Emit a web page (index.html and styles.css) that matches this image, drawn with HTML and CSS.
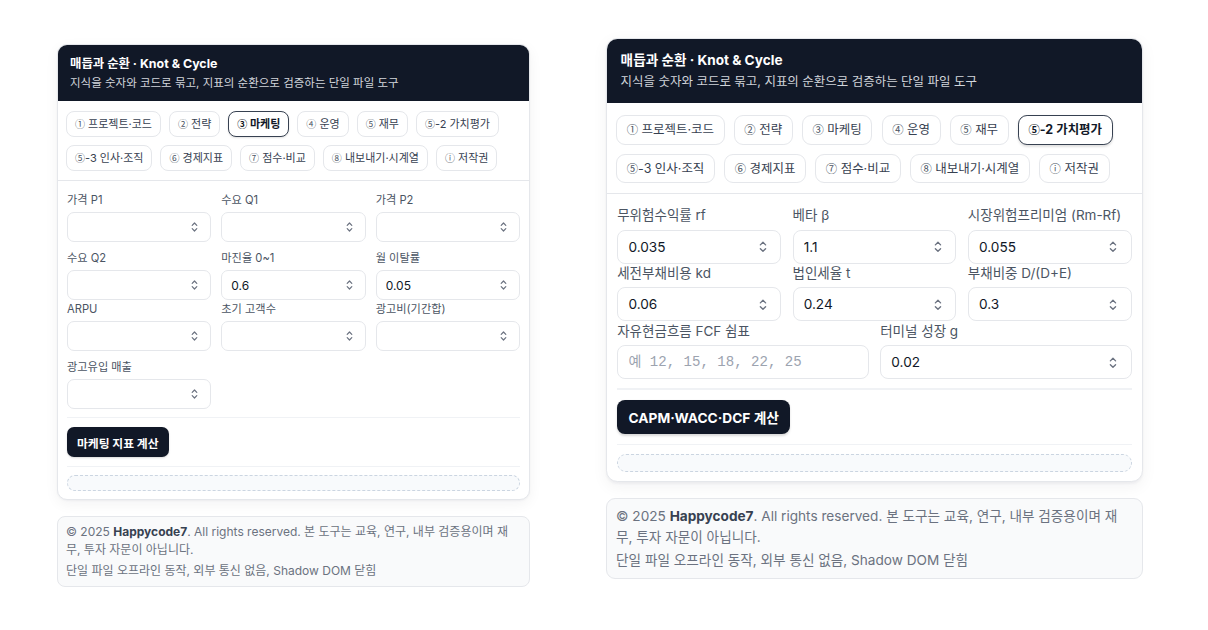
FILE: index.html
```html
<!DOCTYPE html>
<html lang="ko">
<head>
<meta charset="utf-8">
<title>매듭과 순환 · Knot &amp; Cycle</title>
<link rel="stylesheet" href="styles.css">
</head>
<body>
<div class="page">
  <div class="col col-left">
    <section class="card">
      <header class="head">
        <h1 class="title">매듭과 순환 · Knot &amp; Cycle</h1>
        <p class="sub">지식을 숫자와 코드로 묶고, 지표의 순환으로 검증하는 단일 파일 도구</p>
      </header>
      <nav class="tabs">
        <button class="tab"><span class="n">①</span> 프로젝트·코드</button>
        <button class="tab"><span class="n">②</span> 전략</button>
        <button class="tab active"><span class="n">③</span> 마케팅</button>
        <button class="tab"><span class="n">④</span> 운영</button>
        <button class="tab"><span class="n">⑤</span> 재무</button>
        <button class="tab"><span class="n">⑤</span>-2 가치평가</button>
        <button class="tab"><span class="n">⑤</span>-3 인사·조직</button>
        <button class="tab"><span class="n">⑥</span> 경제지표</button>
        <button class="tab"><span class="n">⑦</span> 점수·비교</button>
        <button class="tab"><span class="n">⑧</span> 내보내기·시계열</button>
        <button class="tab"><span class="n">ⓘ</span> 저작권</button>
      </nav>
      <div class="body">
        <div class="frow c3">
          <label class="field"><span class="lbl">가격 P1</span><span class="box"><input type="number"><svg class="spin" viewBox="0 0 7 12" width="7" height="12"><path d="M1.2 4.3 L3.5 2 L5.8 4.3 M1.2 7.7 L3.5 10 L5.8 7.7"/></svg></span></label>
          <label class="field"><span class="lbl">수요 Q1</span><span class="box"><input type="number"><svg class="spin" viewBox="0 0 7 12" width="7" height="12"><path d="M1.2 4.3 L3.5 2 L5.8 4.3 M1.2 7.7 L3.5 10 L5.8 7.7"/></svg></span></label>
          <label class="field"><span class="lbl">가격 P2</span><span class="box"><input type="number"><svg class="spin" viewBox="0 0 7 12" width="7" height="12"><path d="M1.2 4.3 L3.5 2 L5.8 4.3 M1.2 7.7 L3.5 10 L5.8 7.7"/></svg></span></label>
        </div>
        <div class="frow c3 spaced">
          <label class="field"><span class="lbl">수요 Q2</span><span class="box"><input type="number"><svg class="spin" viewBox="0 0 7 12" width="7" height="12"><path d="M1.2 4.3 L3.5 2 L5.8 4.3 M1.2 7.7 L3.5 10 L5.8 7.7"/></svg></span></label>
          <label class="field"><span class="lbl">마진율 0~1</span><span class="box"><input type="number" value="0.6"><svg class="spin" viewBox="0 0 7 12" width="7" height="12"><path d="M1.2 4.3 L3.5 2 L5.8 4.3 M1.2 7.7 L3.5 10 L5.8 7.7"/></svg></span></label>
          <label class="field"><span class="lbl">월 이탈률</span><span class="box"><input type="number" value="0.05"><svg class="spin" viewBox="0 0 7 12" width="7" height="12"><path d="M1.2 4.3 L3.5 2 L5.8 4.3 M1.2 7.7 L3.5 10 L5.8 7.7"/></svg></span></label>
        </div>
        <div class="frow c3">
          <label class="field"><span class="lbl">ARPU</span><span class="box"><input type="number"><svg class="spin" viewBox="0 0 7 12" width="7" height="12"><path d="M1.2 4.3 L3.5 2 L5.8 4.3 M1.2 7.7 L3.5 10 L5.8 7.7"/></svg></span></label>
          <label class="field"><span class="lbl">초기 고객수</span><span class="box"><input type="number"><svg class="spin" viewBox="0 0 7 12" width="7" height="12"><path d="M1.2 4.3 L3.5 2 L5.8 4.3 M1.2 7.7 L3.5 10 L5.8 7.7"/></svg></span></label>
          <label class="field"><span class="lbl">광고비(기간합)</span><span class="box"><input type="number"><svg class="spin" viewBox="0 0 7 12" width="7" height="12"><path d="M1.2 4.3 L3.5 2 L5.8 4.3 M1.2 7.7 L3.5 10 L5.8 7.7"/></svg></span></label>
        </div>
        <div class="frow c3 spaced">
          <label class="field"><span class="lbl">광고유입 매출</span><span class="box"><input type="number"><svg class="spin" viewBox="0 0 7 12" width="7" height="12"><path d="M1.2 4.3 L3.5 2 L5.8 4.3 M1.2 7.7 L3.5 10 L5.8 7.7"/></svg></span></label>
        </div>
        <div class="sep"></div>
        <div class="actions"><button class="btn">마케팅 지표 계산</button></div>
        <div class="sep"></div>
        <div class="out"></div>
      </div>
    </section>
    <footer class="foot">
      <p>© 2025 <b>Happycode7</b>. All rights reserved. 본 도구는 교육, 연구, 내부 검증용이며 재무, 투자 자문이 아닙니다.</p>
      <p>단일 파일 오프라인 동작, 외부 통신 없음, Shadow DOM 닫힘</p>
    </footer>
  </div>

  <div class="col col-right">
    <div class="scaled">
      <section class="card">
        <header class="head">
          <h1 class="title">매듭과 순환 · Knot &amp; Cycle</h1>
          <p class="sub">지식을 숫자와 코드로 묶고, 지표의 순환으로 검증하는 단일 파일 도구</p>
        </header>
        <nav class="tabs">
          <button class="tab"><span class="n">①</span> 프로젝트·코드</button>
          <button class="tab"><span class="n">②</span> 전략</button>
          <button class="tab"><span class="n">③</span> 마케팅</button>
          <button class="tab"><span class="n">④</span> 운영</button>
          <button class="tab"><span class="n">⑤</span> 재무</button>
          <button class="tab active"><span class="n">⑤</span>-2 가치평가</button>
          <button class="tab"><span class="n">⑤</span>-3 인사·조직</button>
          <button class="tab"><span class="n">⑥</span> 경제지표</button>
          <button class="tab"><span class="n">⑦</span> 점수·비교</button>
          <button class="tab"><span class="n">⑧</span> 내보내기·시계열</button>
          <button class="tab"><span class="n">ⓘ</span> 저작권</button>
        </nav>
        <div class="body">
          <div class="frow c3">
            <label class="field"><span class="lbl">무위험수익률 rf</span><span class="box"><input type="number" value="0.035"><svg class="spin" viewBox="0 0 7 12" width="7" height="12"><path d="M1.2 4.3 L3.5 2 L5.8 4.3 M1.2 7.7 L3.5 10 L5.8 7.7"/></svg></span></label>
            <label class="field"><span class="lbl">베타 β</span><span class="box"><input type="number" value="1.1"><svg class="spin" viewBox="0 0 7 12" width="7" height="12"><path d="M1.2 4.3 L3.5 2 L5.8 4.3 M1.2 7.7 L3.5 10 L5.8 7.7"/></svg></span></label>
            <label class="field"><span class="lbl">시장위험프리미엄 (Rm-Rf)</span><span class="box"><input type="number" value="0.055"><svg class="spin" viewBox="0 0 7 12" width="7" height="12"><path d="M1.2 4.3 L3.5 2 L5.8 4.3 M1.2 7.7 L3.5 10 L5.8 7.7"/></svg></span></label>
          </div>
          <div class="frow c3">
            <label class="field"><span class="lbl">세전부채비용 kd</span><span class="box"><input type="number" value="0.06"><svg class="spin" viewBox="0 0 7 12" width="7" height="12"><path d="M1.2 4.3 L3.5 2 L5.8 4.3 M1.2 7.7 L3.5 10 L5.8 7.7"/></svg></span></label>
            <label class="field"><span class="lbl">법인세율 t</span><span class="box"><input type="number" value="0.24"><svg class="spin" viewBox="0 0 7 12" width="7" height="12"><path d="M1.2 4.3 L3.5 2 L5.8 4.3 M1.2 7.7 L3.5 10 L5.8 7.7"/></svg></span></label>
            <label class="field"><span class="lbl">부채비중 D/(D+E)</span><span class="box"><input type="number" value="0.3"><svg class="spin" viewBox="0 0 7 12" width="7" height="12"><path d="M1.2 4.3 L3.5 2 L5.8 4.3 M1.2 7.7 L3.5 10 L5.8 7.7"/></svg></span></label>
          </div>
          <div class="frow c2">
            <label class="field"><span class="lbl">자유현금흐름 FCF 쉼표</span><span class="box"><input type="text" class="mono" placeholder="예 12, 15, 18, 22, 25"></span></label>
            <label class="field"><span class="lbl">터미널 성장 g</span><span class="box"><input type="number" value="0.02"><svg class="spin" viewBox="0 0 7 12" width="7" height="12"><path d="M1.2 4.3 L3.5 2 L5.8 4.3 M1.2 7.7 L3.5 10 L5.8 7.7"/></svg></span></label>
          </div>
          <div class="sep"></div>
          <div class="actions"><button class="btn">CAPM·WACC·DCF 계산</button></div>
          <div class="sep"></div>
          <div class="out"></div>
        </div>
      </section>
      <footer class="foot">
        <p>© 2025 <b>Happycode7</b>. All rights reserved. 본 도구는 교육, 연구, 내부 검증용이며 재무, 투자 자문이 아닙니다.</p>
        <p>단일 파일 오프라인 동작, 외부 통신 없음, Shadow DOM 닫힘</p>
      </footer>
    </div>
  </div>
</div>
</body>
</html>
```
FILE: styles.css
```css
* { box-sizing: border-box; }

html, body {
  margin: 0;
  background: #ffffff;
}

body {
  font-family: Inter, "Noto Sans CJK KR", sans-serif;
  color: #111827;
}

.page {
  display: flex;
  align-items: flex-start;
  padding-left: 57px;
  gap: 76px;
}

.col { width: 473px; flex: none; }
.col-left { margin-top: 44px; }
.col-right { margin-top: 38px; width: 537px; }
.scaled { zoom: 1.1353; width: 473px; }

.card {
  background: #ffffff;
  border: 1px solid #e5e7eb;
  border-radius: 10px;
  overflow: hidden;
  box-shadow: 0 1px 2px rgba(17, 24, 39, 0.04), 0 4px 14px rgba(17, 24, 39, 0.05);
}

.head {
  background: #111827;
  padding: 11px 12px 10px;
  height: 56px;
}

.title {
  margin: 0;
  font-size: 12px;
  line-height: 16px;
  font-weight: 700;
  color: #ffffff;
}

.sub {
  margin: 3px 0 0;
  font-size: 11px;
  line-height: 16px;
  color: #d1d5db;
}

.col-left .title { font-size: 12.4px; }
.col-left .sub { font-size: 11.5px; }

.tabs {
  display: flex;
  flex-wrap: wrap;
  gap: 8px 8px;
  padding: 10px 8px 9px;
  border-bottom: 1px solid #e5e7eb;
}

.col-right .tabs { padding-top: 11px; }

.tab {
  font: inherit;
  font-size: 11px;
  line-height: 24px;
  height: 26px;
  padding: 0 8px;
  color: #374151;
  background: #ffffff;
  border: 1px solid #e5e7eb;
  border-radius: 8px;
  white-space: nowrap;
}

.col-right .tab { padding: 0 8.5px; }

.tab .n {
  font-family: "Noto Sans CJK KR", sans-serif;
  font-weight: 400;
  font-size: 10px;
  color: #4b5563;
}

.tab.active {
  font-weight: 700;
  color: #111827;
  border: 1.5px solid #374151;
  box-shadow: 0 1px 2px rgba(0, 0, 0, 0.12);
}

.tab.active .n {
  font-weight: 700;
  color: #111827;
}

.body {
  padding: 12px 9px 8px;
}

.frow {
  display: grid;
  column-gap: 10px;
  margin-top: 2px;
}
.frow:first-child { margin-top: 0; }
.frow.spaced { margin-top: 9px; }
.c3 { grid-template-columns: repeat(3, 1fr); }
.c2 { grid-template-columns: repeat(2, 1fr); }

.field {
  display: flex;
  flex-direction: column;
  gap: 5px;
  min-width: 0;
}

.lbl {
  font-size: 11px;
  line-height: 14px;
  color: #4b5563;
  white-space: nowrap;
}

.col-left .lbl { font-size: 11.2px; }
.col-right .lbl { font-size: 11.9px; }

.box {
  display: flex;
  align-items: center;
  height: 30px;
  padding: 0 12px 0 9px;
  border: 1px solid #e5e7eb;
  border-radius: 7px;
  background: #ffffff;
}

.box input {
  flex: 1;
  min-width: 0;
  border: 0;
  outline: 0;
  padding: 0;
  background: transparent;
  font: inherit;
  font-size: 12px;
  color: #111827;
  -moz-appearance: textfield;
  appearance: textfield;
}

.box input::-webkit-inner-spin-button,
.box input::-webkit-outer-spin-button {
  -webkit-appearance: none;
  margin: 0;
}

.box input.mono {
  font-family: "Liberation Mono", "Noto Sans CJK KR", monospace;
  font-size: 12.4px;
}

.box input::placeholder {
  color: #9ca3af;
}

.spin {
  flex: none;
  display: block;
}

.spin path {
  fill: none;
  stroke: #6b7280;
  stroke-width: 1.2;
  stroke-linecap: round;
  stroke-linejoin: round;
}

.sep {
  height: 1px;
  background: #f0f2f5;
  margin-top: 8px;
}

.actions {
  padding: 9px 0;
}

.btn {
  font: inherit;
  font-size: 11.8px;
  font-weight: 700;
  height: 30px;
  padding: 0 10px;
  color: #ffffff;
  background: #111827;
  border: 0;
  border-radius: 7px;
  box-shadow: 0 1px 2px rgba(0, 0, 0, 0.15);
}

.col-right .btn { font-size: 12.1px; }

.actions + .sep { margin-top: 0; }

.out {
  margin-top: 8px;
  height: 16px;
  border: 1px dashed #cbd5e1;
  border-radius: 8px;
  background: #f8fafc;
}

.foot {
  margin-top: 16px;
  background: #f9fafb;
  border: 1px solid #e5e7eb;
  border-radius: 8px;
  padding: 6px 8px 6px;
  font-size: 12px;
  line-height: 18px;
  color: #6b7280;
}

.col-right .foot { margin-top: 14px; }

.foot p { margin: 0; }
.foot p + p { margin-top: 3px; }
.foot b { color: #374151; font-weight: 700; }
```
